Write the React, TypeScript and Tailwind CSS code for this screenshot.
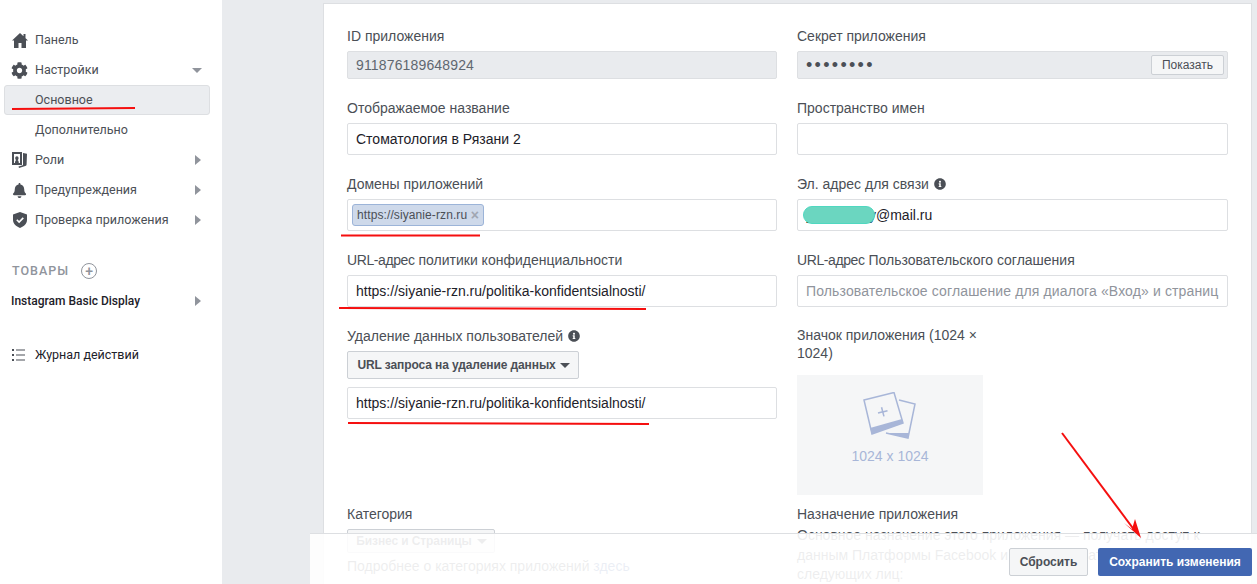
import type { ReactNode } from "react";
import { FaBell, FaCog, FaInfoCircle } from "react-icons/fa";

const SideRow = ({ icon, label, arrow, active }: { icon?: ReactNode; label: string; arrow?: "right" | "down"; active?: boolean }) => (
  <div className={`flex h-[30px] items-center rounded-[3px] border pl-[5px] pr-[7px] text-[12.500px] ${active ? "border-[#dddfe2] bg-[#ebedf0]" : "border-transparent"}`}>
    <span className="flex w-[25px] shrink-0 items-center justify-center pr-[6px] text-[#4b4f56]">{icon}</span>
    <span className="flex-1 text-[#4b4f56]">{label}</span>
    {arrow === "right" && <span className="mr-[1px] h-0 w-0 border-y-[5px] border-l-[6px] border-y-transparent border-l-[#90949c]" />}
    {arrow === "down" && <span className="h-0 w-0 border-x-[5px] border-t-[5px] border-x-transparent border-t-[#90949c]" />}
  </div>
);

const Label = ({ children, info }: { children: ReactNode; info?: boolean }) => (
  <div className="mb-[7px] flex h-4 items-center gap-[5px] text-[14px] leading-4 text-[#4b4f56]">
    <span>{children}</span>
    {info && <FaInfoCircle className="text-[12px] text-[#4b4f56]" />}
  </div>
);

const Input = ({ value, placeholder }: { value?: string; placeholder?: string }) => (
  <div className="flex h-8 items-center overflow-hidden whitespace-nowrap rounded-[2px] border border-[#dddfe2] bg-white px-[8px] text-[14px] text-[#1d2129]">
    {value}
    {placeholder && <span className="tracking-[0.13px] text-[#90949c]">{placeholder}</span>}
  </div>
);

const HomeIcon = () => (
  <svg width="16" height="15" viewBox="0 0 16 15" fill="#4b4f56">
    <path d="M8 0l8 7.500h-2V15H9.500v-5h-3v5H2V7.500H0zM11.500 1h2v4.500l-2-2z" />
  </svg>
);

const RolesIcon = () => (
  <svg width="15" height="16" viewBox="0 0 15 16" fill="#4b4f56">
    <path fillRule="evenodd" d="M0 0h10v13H0zM2 2v9h1c0-1.700.4-2.500 1.200-2.800C3.500 7.700 3.200 7 3.200 6.200c0-1.100.7-1.900 1.700-1.900s1.700.8 1.700 1.900c0 .8-.3 1.500-1 2 .8.300 1.200 1.100 1.200 2.800h1.200V2z" />
    <path d="M11 1l4 .8-.4 10.400c0 1-.5 1.600-1.300 1.900L7 16l-.5-1.500 4.200-1.300c.2-.1.300-.3.300-.6z" />
  </svg>
);

const ShieldIcon = () => (
  <svg width="14" height="16" viewBox="0 0 14 16">
    <path d="M7 0l7 2.500v5.500c0 3.500-3 6.500-7 8-4-1.500-7-4.500-7-8V2.500z" fill="#4b4f56" />
    <path d="M3.800 7.800l2.300 2.300 4.200-4.200" fill="none" stroke="#fff" strokeWidth="1.600" />
  </svg>
);

const AppImageIcon = () => (
  <svg width="54" height="48" viewBox="0 0 54 48">
    <path d="M36 8l16 4-7 34-22-5" fill="none" stroke="#a8b6d8" strokeWidth="1.500" />
    <path d="M23 41l23 0-1 5z" fill="#a8b6d8" />
    <path d="M1 8l30-7.500L40 31 9 42z" fill="#f5f6f7" stroke="#a8b6d8" strokeWidth="1.500" />
    <path d="M7 36l32-9 1 4L9 42z" fill="#a8b6d8" />
    <path d="M19.200 20.800l-4 1-.4-1.500 4-1-1-3.800 1.500-.4 1 3.800 4-1 .4 1.500-4 1 1 3.800-1.500.4z" fill="#a8b6d8" />
  </svg>
);

export default function App() {
  return (
    <div className="relative flex h-[584px] w-[1257px] overflow-hidden bg-[#e9ebee] font-['Liberation_Sans',Arial,sans-serif]">
      {/* sidebar */}
      <aside className="w-[222px] shrink-0 bg-white pl-[4px] pr-[12px] pt-[25px] font-['Roboto',sans-serif]">
        <SideRow icon={<HomeIcon />} label="Панель" />
        <SideRow icon={<FaCog className="text-[17px]" />} label="Настройки" arrow="down" />
        <SideRow label="Основное" active />
        <SideRow label="Дополнительно" />
        <SideRow icon={<RolesIcon />} label="Роли" arrow="right" />
        <SideRow icon={<FaBell className="text-[15px]" />} label="Предупреждения" arrow="right" />
        <SideRow icon={<ShieldIcon />} label="Проверка приложения" arrow="right" />

        <div className="mt-[21px] flex h-[30px] items-center gap-[12px] pl-[8px] text-[12.500px] font-medium tracking-[1px] text-[#90949c]">
          ТОВАРЫ
          <span className="flex h-4 w-4 items-center justify-center rounded-full border border-[#90949c] text-[14px] leading-none tracking-normal">+</span>
        </div>
        <div className="flex h-[30px] items-center pl-[7px] pr-[9px] text-[12px] font-medium text-[#1d2129]">
          <span className="flex-1">Instagram Basic Display</span>
          <span className="h-0 w-0 border-y-[5px] border-l-[6px] border-y-transparent border-l-[#90949c]" />
        </div>
        <div className="mt-[24px] flex h-[30px] items-center pl-[8px] text-[12.500px] text-[#1d2129]">
          <svg className="mr-[10px]" width="13" height="12" viewBox="0 0 13 12" fill="#4b4f56">
            <path d="M0 0h2v2H0zM0 5h2v2H0zM0 10h2v2H0zM4 .5h9v1H4zM4 5.500h9v1H4zM4 10.500h9v1H4z" />
          </svg>
          Журнал действий
        </div>
      </aside>

      {/* main */}
      <main className="flex-1 pl-[101px] pr-[5px] pt-[3px]">
        <div className="grid h-[640px] grid-cols-[430px_431px] gap-x-5 border border-[#dddfe2] bg-white pl-[23px] pt-[24px]">
          <div className="flex flex-col">
            <Label>ID приложения</Label>
            <div className="mb-[21px] flex h-[28px] items-center rounded-[2px] border border-[#dddfe2] bg-[#e9ebee] px-[8px] text-[14px] tracking-[0.15px] text-[#606770]">911876189648924</div>
            <Label>Отображаемое название</Label>
            <div className="mb-[21px]"><Input value="Стоматология в Рязани 2" /></div>
            <Label>Домены приложений</Label>
            <div className="mb-[21px] flex h-8 items-center rounded-[2px] border border-[#dddfe2] bg-white pl-[4px]">
              <span className="flex h-[22px] w-[132px] items-center justify-between rounded-[3px] border border-[#9cb4d8] bg-[#ced9ea] pl-[4px] pr-[4px] text-[12px] tracking-[0.1px] text-[#4b4f56]">
                https://siyanie-rzn.ru
                <span className="text-[14px] font-bold leading-none text-[#a0a6b2]">×</span>
              </span>
            </div>
            <Label><span className="tracking-[-0.4px]">URL-адрес</span> политики конфиденциальности</Label>
            <div className="mb-[21px]"><Input value="https://siyanie-rzn.ru/politika-konfidentsialnosti/" /></div>
            <Label info>Удаление данных пользователей</Label>
            <div className="mb-[8px] flex h-[28px] w-[232px] items-center justify-center gap-[4px] rounded-[2px] border border-[#ccd0d5] bg-[#f5f6f7] pl-[1px] text-[12px] font-bold tracking-[-0.1px] text-[#4b4f56]">
              URL запроса на удаление данных
              <span className="h-0 w-0 border-x-[5px] border-t-[5px] border-x-transparent border-t-[#4b4f56]" />
            </div>
            <Input value="https://siyanie-rzn.ru/politika-konfidentsialnosti/" />
            <div className="mt-[87px]">
              <Label>Категория</Label>
              <div className="flex h-[24px] w-[148px] items-center justify-center gap-[5px] rounded-[2px] border border-[#ccd0d5] bg-[#f5f6f7] pl-[1px] text-[12px] font-bold tracking-[-0.1px] text-[#4b4f56]">
                Бизнес и Страницы
                <span className="h-0 w-0 border-x-[5px] border-t-[5px] border-x-transparent border-t-[#4b4f56]" />
              </div>
              <p className="mt-[3px] text-[14px] text-[#4b4f56]">
                Подробнее о категориях приложений <span className="text-[#365899]">здесь</span>
              </p>
            </div>
          </div>

          <div className="flex flex-col">
            <Label>Секрет приложения</Label>
            <div className="mb-[21px] flex h-[28px] items-center justify-between rounded-[2px] border border-[#dddfe2] bg-[#e9ebee] pl-[8px] pr-[3px]">
              <span className="text-[18px] tracking-[2.300px] text-[#4b4f56]">••••••••</span>
              <span className="flex h-[20px] w-[73px] items-center justify-center rounded-[2px] border border-[#ccd0d5] bg-[#f5f6f7] text-[12px] text-[#4b4f56]">Показать</span>
            </div>
            <Label>Пространство имен</Label>
            <div className="mb-[21px]"><Input /></div>
            <Label info>Эл. адрес для связи</Label>
            <div className="relative mb-[21px]">
              <Input value="yyyyyyyyyy@mail.ru" />
              <span className="absolute left-[6px] top-[7px] h-[18px] w-[72px] rounded-full border border-[#4fd8c0] bg-[#6bd6c0]" />
            </div>
            <Label><span className="tracking-[-0.4px]">URL-адрес</span> Пользовательского соглашения</Label>
            <div className="mb-[19px]"><Input placeholder="Пользовательское соглашение для диалога «Вход» и страниц" /></div>
            <p className="mb-[13px] w-[190px] text-[14px] leading-[18px] text-[#4b4f56]">Значок приложения (1024 × 1024)</p>
            <div className="flex h-[120px] w-[186px] flex-col items-center bg-[#f5f6f7] pt-[17px]">
              <AppImageIcon />
              <span className="mt-[6px] text-[14px] font-medium text-[#a8b6d8]">1024 x 1024</span>
            </div>
            <div className="mt-[11px]">
              <Label>Назначение приложения</Label>
              <p className="mt-[-3px] w-[420px] text-[14px] leading-[19.500px] text-[#4b4f56]">
                Основное назначение этого приложения — получать доступ к данным Платформы Facebook и анализировать их для следующих лиц:
              </p>
            </div>
          </div>
        </div>
      </main>

      {/* save bar over the form */}
      <div className="absolute bottom-0 left-[310px] right-0 flex h-[51px] items-start justify-end gap-[10px] border-t border-[#dddfe2] bg-white/90 pr-[5px] pt-[14px]">
        <button className="h-[28px] w-[79px] rounded-[2px] border border-[#ccd0d5] bg-[#f5f6f7] text-[12px] font-bold text-[#4b4f56]">Сбросить</button>
        <button className="h-[28px] w-[154px] rounded-[2px] bg-[#4267b2] text-[12px] font-bold text-white">Сохранить изменения</button>
      </div>

      {/* red marks drawn on top of the screenshot */}
      <svg className="pointer-events-none absolute left-0 top-0" width="1257" height="584" fill="none" stroke="#f50f0f" strokeWidth="2">
        <path d="M12 109l123-1" />
        <path d="M341 235.500h139" />
        <path d="M339 308l307 1" />
        <path d="M348 423l301 1" />
        <path d="M1062 433l73 98" />
        <path d="M1124 523l8 6 3-10 6 19z" fill="#f50f0f" stroke="none" />
      </svg>
    </div>
  );
}
